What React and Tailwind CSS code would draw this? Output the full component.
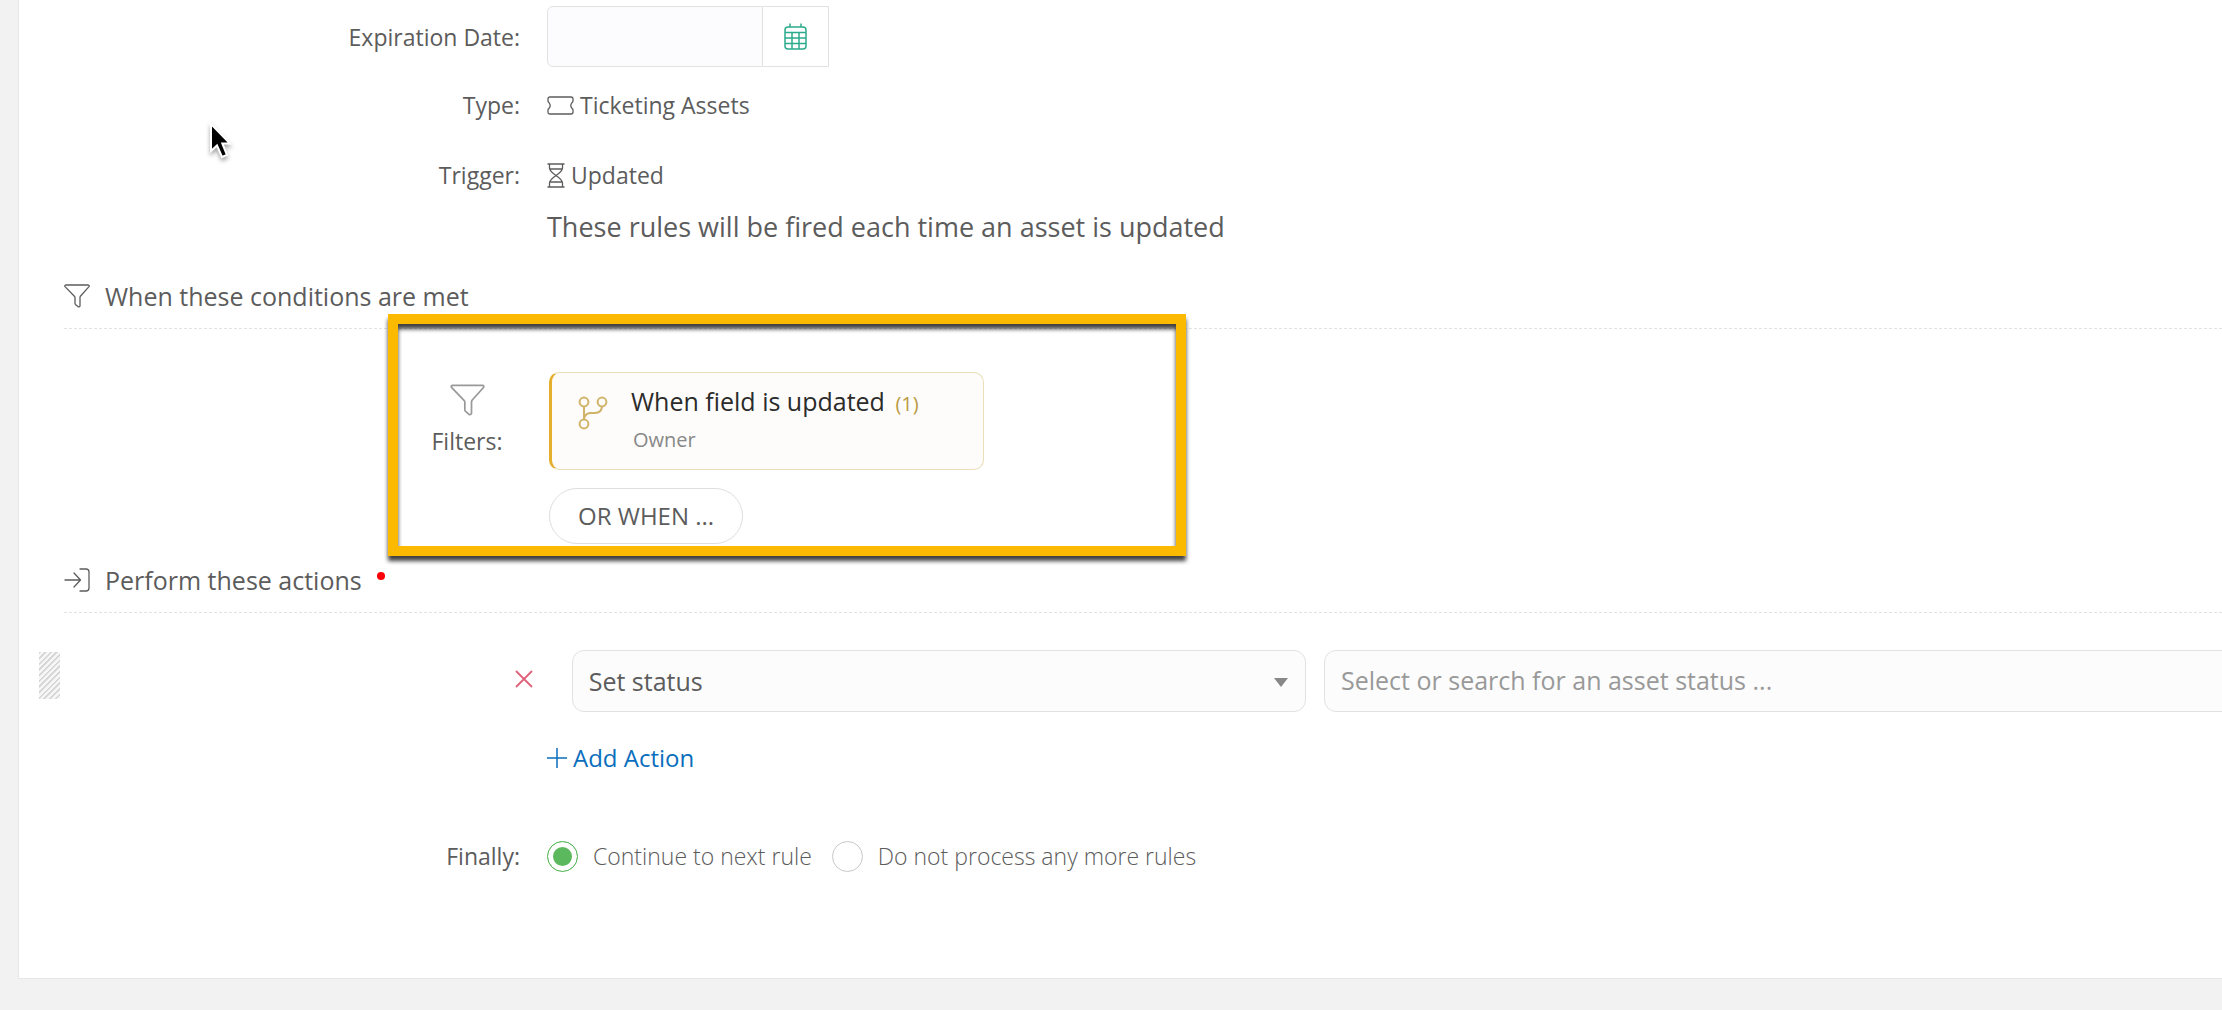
import React, { useState } from 'react';

const CalendarIcon = () => (
  <svg width="23" height="27" viewBox="0 0 23 27" fill="none" stroke="#2bab8c" strokeWidth="1.5">
    <rect x="1" y="4" width="21" height="22" rx="3" />
    <path d="M6 0.5V4M17 0.5V4M1 9.5H22M1 15H22M1 20.5H22M8 9.5V26M15 9.5V26" />
  </svg>
);

const TicketIcon = () => (
  <svg width="27" height="19" viewBox="0 0 27 19" fill="none" stroke="currentColor" strokeWidth="1.3">
    <path d="M3 1H24Q26 1 26 3V5Q26 6 25 6.6Q22.6 9.5 25 12.4Q26 13 26 14V16Q26 18 24 18H3Q1 18 1 16V14Q1 13 2 12.4Q4.4 9.5 2 6.6Q1 6 1 5V3Q1 1 3 1Z" />
  </svg>
);

const HourglassIcon = () => (
  <svg width="18" height="25" viewBox="0 0 18 25" fill="none" stroke="currentColor" strokeWidth="1.3">
    <path d="M0.5 1H17.5M0.5 24H17.5M2.5 1V5Q2.5 8 9 12.5Q15.5 17 15.5 20V24M15.5 1V5Q15.5 8 9 12.5Q2.5 17 2.5 20V24M3 6H15M3 19H15" />
  </svg>
);

const FunnelIcon = ({ className }) => (
  <svg className={className} viewBox="0 0 26 24" fill="none" stroke="currentColor" strokeWidth="1.3" strokeLinejoin="round">
    <path d="M1.6 1H24.4Q25.6 1.4 25 2.6L16.4 12.2Q16 12.8 16 13.6V22Q15.4 23.4 14 22.6L11.4 20.4Q11 20 11 19.4V13.6Q11 12.8 10.4 12.2L1 2.6Q0.4 1.4 1.6 1Z" />
  </svg>
);

const EnterIcon = () => (
  <svg width="26" height="24" viewBox="0 0 26 24" fill="none" stroke="currentColor" strokeWidth="1.3" strokeLinecap="round" strokeLinejoin="round">
    <path d="M1 12H16M10 5L16.5 12L10 19M16 1H22Q25 1 25 4V20Q25 23 22 23H16" />
  </svg>
);

const BranchIcon = () => (
  <svg width="30" height="34" viewBox="0 0 30 34" fill="none" stroke="#d0b368" strokeWidth="2">
    <circle cx="6" cy="6" r="4.4" />
    <circle cx="24" cy="6" r="4.4" />
    <circle cx="6" cy="28" r="4.4" />
    <path d="M6 10.4V23.6M24 10.4Q23.5 17 17 17H12Q6.5 17.5 6 23.6" />
  </svg>
);

const Row = ({ label, htmlFor, children }) => (
  <div className="flex items-center gap-[27px]">
    <label htmlFor={htmlFor} className="w-[456px] shrink-0 text-right">
      {label}
    </label>
    {children}
  </div>
);

const SectionHeader = ({ icon, title, required }) => (
  <div className="ml-[45px] flex items-center gap-[15px] border-b border-dashed border-[#e2e2e2] pb-[14px] text-[25px]">
    {icon}
    <h2 className="leading-9">{title}</h2>
    {required && <span className="mb-2 h-2 w-2 rounded-full bg-[#fb0007]" />}
  </div>
);

const RadioOption = ({ label, checked, onChange }) => (
  <label className="flex items-center gap-[15px] font-light">
    <input
      type="radio"
      name="finally"
      checked={checked}
      onChange={onChange}
      className="h-[31px] w-[31px] appearance-none rounded-full border border-[#c8c8c8] bg-white checked:border-[#5cb85c] checked:bg-[#5cb85c] checked:shadow-[inset_0_0_0_5px_white]"
    />
    {label}
  </label>
);

const App = () => {
  const [next, setNext] = useState('continue');

  return (
    <div className="relative min-h-screen overflow-hidden bg-[#f2f2f2] pl-[18px] font-['Open_Sans',sans-serif] text-[23px] leading-9 text-[#5c5c5c]">
      <main className="border-b border-l border-[#e7e7e7] bg-white pt-[6px] pb-[104px]">
        <div className="pl-[45px]">
          <Row label="Expiration Date:" htmlFor="expiration">
            <div className="flex h-[61px]">
              <input id="expiration" type="text" className="w-[216px] rounded-l-md border border-[#e2e2e2] bg-[#fcfcfe] px-4" />
              <button aria-label="Pick a date" className="flex w-[66px] items-center justify-center border border-l-0 border-[#e2e2e2]">
                <CalendarIcon />
              </button>
            </div>
          </Row>
          <div className="mt-5">
            <Row label="Type:">
              <span className="flex items-center gap-[6px]">
                <TicketIcon /> Ticketing Assets
              </span>
            </Row>
          </div>
          <div className="mt-[34px]">
            <Row label="Trigger:">
              <span className="flex items-center gap-[6px]">
                <HourglassIcon /> Updated
              </span>
            </Row>
          </div>
          <p className="mt-4 pl-[483px] text-[27px]">These rules will be fired each time an asset is updated</p>
        </div>

        <section className="mt-[33px]">
          <SectionHeader icon={<FunnelIcon className="h-6 w-[26px]" />} title="When these conditions are met" />
          <div className="relative mt-[43px] flex gap-[46px] pl-[412px]">
            <div className="flex w-[72px] flex-col items-center pt-3">
              <FunnelIcon className="h-8 w-[35px] text-[#999]" />
              <span className="mt-[7px]">Filters:</span>
            </div>
            <div>
              <div className="flex h-[98px] w-[435px] gap-[23px] rounded-[10px] border border-l-3 border-[#eadfb8] border-l-[#e5ae2c] bg-[#fdfcfa] pl-[26px]">
                <div className="pt-[23px]">
                  <BranchIcon />
                </div>
                <div className="pt-[10px]">
                  <h3 className="text-[25px] text-[#2b2b2b]">
                    When field is updated <span className="ml-1 text-[20px] text-[#b99a45]">(1)</span>
                  </h3>
                  <p className="pl-[2px] text-[20px] text-[#888]">Owner</p>
                </div>
              </div>
              <button className="mt-[18px] h-14 rounded-full border border-[#dedede] px-7 text-[24px]">OR WHEN ...</button>
            </div>
            <div className="pointer-events-none absolute -top-[58px] left-[369px] h-[242px] w-[798px] border-10 border-[#fbba00] drop-shadow-[0_5px_2px_rgba(0,0,0,0.75)]" />
          </div>
        </section>

        <section className="mt-[18px]">
          <SectionHeader icon={<EnterIcon />} title="Perform these actions" required />
          <div className="mt-[37px] flex h-[62px]">
            <div className="mt-[2px] ml-5 h-[47px] w-[21px] bg-[repeating-linear-gradient(135deg,#d4d4d4_0px,#d4d4d4_1px,#f6f6f6_2px,#f6f6f6_4px)]" />
            <button aria-label="Remove action" className="ml-auto flex w-[18px] items-center pb-1 text-[#e0607a]">
              <svg width="18" height="18" viewBox="0 0 18 18" stroke="currentColor" strokeWidth="1.8">
                <path d="M1 1L17 17M17 1L1 17" />
              </svg>
            </button>
            <div className="relative ml-[39px] w-1/3">
              <select aria-label="Action" className="h-full w-full appearance-none rounded-xl border border-[#e2e2e2] bg-[#fcfcfc] px-4 text-[25px]">
                <option>Set status</option>
              </select>
              <svg width="14" height="9" viewBox="0 0 14 9" className="pointer-events-none absolute top-7 right-[18px]">
                <path d="M0 0H14L7 9Z" fill="#888" />
              </svg>
            </div>
            <input
              aria-label="Asset status"
              placeholder="Select or search for an asset status ..."
              className="-mr-4 ml-[18px] w-[914px] rounded-xl border border-[#e2e2e2] bg-[#fcfcfc] px-4 pb-[2px] text-[25px] placeholder:text-[#999]"
            />
          </div>
          <div className="mt-7 pl-[528px]">
            <button className="flex items-center gap-[6px] text-[24px] text-[#0a6ebd]">
              <svg width="20" height="20" viewBox="0 0 20 20" stroke="currentColor" strokeWidth="1.5">
                <path d="M10 0V20M0 10H20" />
              </svg>
              Add Action
            </button>
          </div>
        </section>

        <div className="mt-[62px] pl-[45px]">
          <Row label="Finally:">
            <div className="flex gap-5">
              <RadioOption label="Continue to next rule" checked={next === 'continue'} onChange={() => setNext('continue')} />
              <RadioOption label="Do not process any more rules" checked={next === 'stop'} onChange={() => setNext('stop')} />
            </div>
          </Row>
        </div>
      </main>

      {/* mouse pointer */}
      <svg width="30" height="42" viewBox="0 0 30 42" className="pointer-events-none absolute top-[122px] left-[208px] drop-shadow-[0_3px_2px_rgba(0,0,0,0.35)]">
        <path d="M3 2V29L9 23.5L14 35L19 33L14.300 21.500H22Z" fill="#000" stroke="#fff" strokeWidth="2" />
      </svg>
    </div>
  );
};

export default App;
